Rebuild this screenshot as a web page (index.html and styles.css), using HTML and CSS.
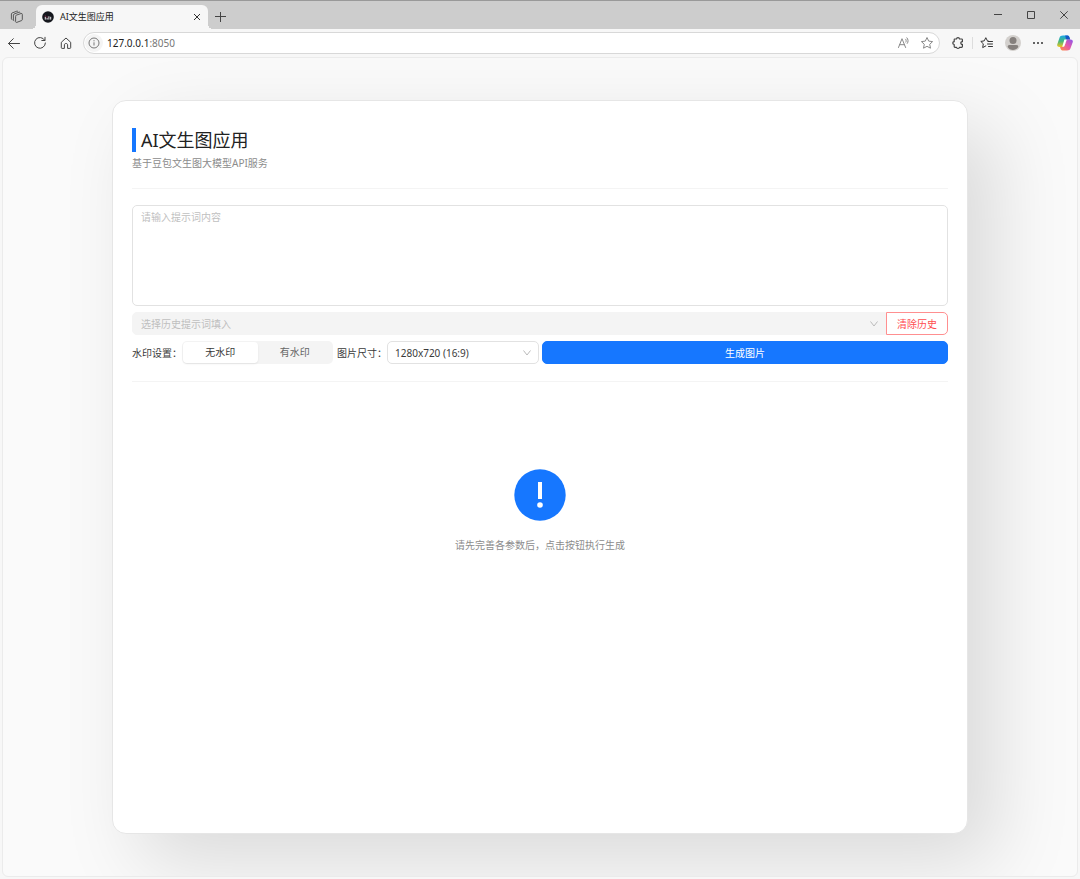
FILE: index.html
```html
<!DOCTYPE html>
<html lang="zh-CN">
<head>
<meta charset="utf-8">
<meta name="viewport" content="width=device-width, initial-scale=1">
<title>AI文生图应用</title>
<link rel="stylesheet" href="styles.css">
</head>
<body>
<div class="browser">
  <header class="tabstrip">
    <button class="icon-btn workspaces" type="button" aria-label="工作区">
      <svg width="14" height="14" viewBox="0 0 14 14" fill="none" stroke="#4a4a4a" stroke-width=".9" stroke-linejoin="round" stroke-linecap="round"><path d="M5.600 6.200c0-.5.200-.8.600-1l4.900-1.700c.7-.2 1.200.1 1.200.8v5.200c0 .5-.2.8-.6 1l-4.900 1.900c-.7.2-1.200-.1-1.200-.8zM3.900 10.800c-.4-.1-.5-.4-.5-.8V5.100c0-.5.200-.8.600-1l5-1.900c.5-.2.900 0 1.100.4M2 9.600c-.4-.1-.6-.4-.6-.8V4c0-.5.200-.8.600-1l4.800-1.800c.5-.2.900 0 1.100.3"/></svg>
    </button>
    <div class="tab">
      <svg class="favicon" width="12" height="12" viewBox="0 0 12 12"><circle cx="6" cy="6" r="5.8" fill="#15171d"/><path d="M3.300 6v2.600M5.100 7v1.600M6.900 5.300v3.300M8.700 5.800v2.800" stroke="#e8e8ec" stroke-width="1"/><path d="M3.300 4.700v.8M5.100 5.700v.8" stroke="#d64572"/></svg>
      <span class="tab-title">AI文生图应用</span>
      <button class="icon-btn" type="button" aria-label="关闭标签页">
        <svg width="8" height="8" viewBox="0 0 8 8" stroke="#333" fill="none"><path d="m1 1 6 6M7 1 1 7"/></svg>
      </button>
    </div>
    <button class="icon-btn new-tab" type="button" aria-label="新建标签页">
      <svg width="12" height="12" viewBox="0 0 12 12" stroke="#444" fill="none"><path d="M6.500 1v10M1 5.500h11"/></svg>
    </button>
    <div class="window-controls">
      <button class="icon-btn" type="button" aria-label="最小化"><svg width="10" height="10" viewBox="0 0 10 10" stroke="#444" fill="none"><path d="M1 4.500h8"/></svg></button>
      <button class="icon-btn" type="button" aria-label="最大化"><svg width="10" height="10" viewBox="0 0 10 10" stroke="#444" fill="none"><path d="M1.500 1.500h7v7h-7z"/></svg></button>
      <button class="icon-btn" type="button" aria-label="关闭"><svg width="10" height="10" viewBox="0 0 10 10" stroke="#444" fill="none"><path d="m1.300 1.300 7.400 7.400M8.700 1.300 1.300 8.700"/></svg></button>
    </div>
  </header>
  <nav class="toolbar">
    <div class="nav-buttons">
      <button class="icon-btn" type="button" aria-label="后退"><svg width="14" height="14" viewBox="0 0 14 14" stroke="#444" fill="none" stroke-linecap="round" stroke-linejoin="round"><path d="M12.500 7.500h-11M6.300 2.700 1.500 7.500l4.800 4.800"/></svg></button>
      <button class="icon-btn" type="button" aria-label="刷新"><svg width="14" height="14" viewBox="0 0 14 14" stroke="#444" fill="none" stroke-linecap="round" stroke-linejoin="round"><path d="M11.700 4.200A5.400 5.400 0 1 0 12.400 7M12 1.300v3.200H8.800"/></svg></button>
      <button class="icon-btn" type="button" aria-label="主页"><svg width="14" height="14" viewBox="0 0 14 14" stroke="#444" fill="none" stroke-linejoin="round"><path d="M2.300 6.300 7 2l4.700 4.300v5.300c0 .5-.3.800-.8.800H8.600V9c0-1-.6-1.500-1.600-1.500S5.400 8 5.400 9v3.400H3.100c-.5 0-.8-.3-.8-.8z"/></svg></button>
    </div>
    <div class="address">
      <button class="site-info" type="button" aria-label="网站信息"><svg width="12" height="12" viewBox="0 0 12 12" stroke="#777" fill="none"><circle cx="6" cy="6" r="5"/><path d="M6 5.300v3.200M6 3.200v1.100"/></svg></button>
      <span class="url">127.0.0.1<span class="port">:8050</span></span>
      <button class="icon-btn" type="button" aria-label="朗读"><svg width="14" height="14" viewBox="0 0 14 14" stroke="#888" fill="none" stroke-linecap="round" stroke-linejoin="round"><path d="M1.500 11.500 5 2.700l3.600 8.800M2.700 8.700h4.700M8.600 3.200c.7.7.8 2 .3 2.900M9.900 1.800c1.500 1.600 1.600 4 .4 5.600"/></svg></button>
      <button class="icon-btn star" type="button" aria-label="收藏"><svg width="14" height="14" viewBox="0 0 14 14" stroke="#888" fill="none" stroke-linejoin="round"><path d="m7 1.500 1.700 3.600 3.900.5-2.900 2.700.8 3.900L7 10.300l-3.500 1.900.8-3.900-2.900-2.700 3.900-.5z"/></svg></button>
    </div>
    <div class="tools">
      <button class="icon-btn" type="button" aria-label="扩展"><svg width="14" height="14" viewBox="0 0 14 14" stroke="#444" stroke-width="1.200" fill="none" stroke-linejoin="round"><path d="M3.700 3h1.800c.1-1.800 2.900-1.800 3 0h2.100c.5 0 .8.300.8.800v1.900c-2-.2-2.200 2.800 0 2.700v2.100c0 .5-.3.800-.8.800H8.500c-.1 1.600-2.900 1.600-3 0H4c-.5 0-.8-.3-.8-.8V8.500c-1.900-.1-1.900-2.700 0-2.800V3.700c0-.4.200-.7.500-.7z"/></svg></button>
      <span class="divider"></span>
      <button class="icon-btn" type="button" aria-label="收藏夹"><svg width="14" height="14" viewBox="0 0 14 14" stroke="#333" fill="none" stroke-linecap="round" stroke-linejoin="round"><path d="M8.200 4.900 7.400 4.800 5.800 1.700 4.200 4.900l-3.400.5 2.500 2.400-.6 3.800 3.100-1.700M8 5.500h4.500M7.500 8h5M8.500 10.500h4"/></svg></button>
      <button class="icon-btn" type="button" aria-label="个人资料"><svg width="16" height="16" viewBox="0 0 16 16"><circle cx="8" cy="8" r="8" fill="#d3d0cd"/><circle cx="8" cy="5.500" r="3.500" fill="#85807d"/><path d="M2.700 12c0-1.400.8-2 2-2h6.600c1.200 0 2 .6 2 2-1.100 1.900-3 3-5.300 3s-4.200-1.100-5.300-3z" fill="#85807d"/></svg></button>
      <button class="icon-btn" type="button" aria-label="更多"><svg width="12" height="12" viewBox="0 0 12 12" fill="#333"><circle cx="2" cy="6" r="1"/><circle cx="6" cy="6" r="1"/><circle cx="10" cy="6" r="1"/></svg></button>
      <button class="icon-btn copilot" type="button" aria-label="Copilot">
        <svg width="16" height="16" viewBox="0 0 16 16">
          <defs>
            <linearGradient id="cpl" x1="0" y1="0" x2="0" y2="1"><stop offset="0" stop-color="#19a8e8"/><stop offset=".5" stop-color="#48b87b"/><stop offset="1" stop-color="#f2c51d"/></linearGradient>
            <linearGradient id="cpr" x1="1" y1="0" x2="0" y2="1"><stop offset="0" stop-color="#8a55ee"/><stop offset=".5" stop-color="#e759a6"/><stop offset="1" stop-color="#ff9140"/></linearGradient>
          </defs>
          <path d="M6 .5h4.500c1.200 0 1.700.8 2 1.900l.6 2.100h-2c-1 0-1.500.5-1.800 1.400L7.800 10c-.4 1.400-1 2-2.300 2H2.600C.6 12-.2 10.800.3 9.200L2.500 2.700C3 1.300 4 .5 6 .5z" fill="url(#cpl)"/>
          <path d="M8.200.5h2.300c1.200 0 1.700.8 2 1.900l.6 2.100h-2.200c-.8 0-1.300.4-1.600 1z" fill="#1557c7"/>
          <path d="M10 15.500H5.500c-1.200 0-1.700-.8-2-1.900L3 12h2.500c1.300 0 1.900-.6 2.300-2l1.400-4.100c.3-.9.800-1.400 1.800-1.400h2.400c2 0 2.800 1.200 2.300 2.800L13.500 13.300c-.5 1.400-1.500 2.200-3.500 2.200z" fill="url(#cpr)"/>
          <path d="M7.400 4.600h2.900c-.6.200-.9.700-1.100 1.300L7.800 10c-.3 1-.7 1.600-1.300 1.800H5.200z" fill="#fff"/>
        </svg>
      </button>
    </div>
  </nav>
  <main class="viewport">
    <section class="card">
      <header class="heading">
        <h1 class="title">AI文生图应用</h1>
        <p class="subtitle">基于豆包文生图大模型API服务</p>
      </header>
      <form class="form">
        <textarea class="prompt" aria-label="提示词" placeholder="请输入提示词内容"></textarea>
        <div class="row history">
          <div class="select-wrap history-select">
            <select class="select filled" aria-label="选择历史提示词填入"><option>选择历史提示词填入</option></select>
            <svg class="chevron" width="10" height="10" viewBox="0 0 10 10" fill="none" stroke="#bbb"><path d="m1.500 2.500 3.500 4.500 3.500-4.500"/></svg>
          </div>
          <button class="btn danger" type="button">清除历史</button>
        </div>
        <div class="row">
          <span class="label" id="watermark-label">水印设置：</span>
          <div class="segmented" role="radiogroup" aria-labelledby="watermark-label">
            <label class="segment"><input class="segment-input" type="radio" name="watermark" checked><span class="segment-text">无水印</span></label>
            <label class="segment"><input class="segment-input" type="radio" name="watermark"><span class="segment-text">有水印</span></label>
          </div>
          <label class="label size-label" for="size">图片尺寸：</label>
          <div class="select-wrap size-select">
            <select class="select" id="size"><option>1280x720 (16:9)</option></select>
            <svg class="chevron" width="10" height="10" viewBox="0 0 10 10" fill="none" stroke="#bbb"><path d="m1.500 2.500 3.500 4.500 3.500-4.500"/></svg>
          </div>
          <button class="btn primary" type="button">生成图片</button>
        </div>
      </form>
      <div class="result">
        <svg width="52" height="52" viewBox="0 0 52 52"><circle cx="26" cy="26" r="25.700" fill="#1677ff"/><path d="M24 13h4v17h-4z" fill="#fff"/><circle cx="26" cy="36" r="2.800" fill="#fff"/></svg>
        <p class="result-text">请先完善各参数后，点击按钮执行生成</p>
      </div>
    </section>
  </main>
</div>
</body>
</html>
```
FILE: styles.css
```css
* { box-sizing: border-box; }

body {
  margin: 0;
  font: 10px/16px "Noto Sans", "Noto Sans CJK SC", sans-serif;
  color: #3a3a3a;
}

button, select, textarea { font: inherit; color: inherit; }

.browser {
  display: flex;
  flex-direction: column;
  min-height: 100vh;
  background: #f7f7f7;
}

.icon-btn {
  display: flex;
  flex: none;
  padding: 0;
  border: 0;
  background: none;
}

/* Tab strip */
.tabstrip {
  display: flex;
  align-items: center;
  height: 29px;
  padding: 4px 11px 0 10px;
  border-top: 1px solid #999;
  background: #cdcdcd;
}

.tab {
  position: relative;
  display: flex;
  align-items: center;
  gap: 6px;
  width: 172px;
  height: 24px;
  margin-left: 12px;
  padding: 0 7px 0 6px;
  border-radius: 6px 6px 0 0;
  background: #f7f7f7;
}

.tab::before, .tab::after {
  content: "";
  position: absolute;
  bottom: 0;
  width: 5px;
  height: 5px;
}

.tab::before { right: 100%; background: radial-gradient(circle at 0 0, #cdcdcd 5px, #f7f7f7 5px); }
.tab::after { left: 100%; background: radial-gradient(circle at 100% 0, #cdcdcd 5px, #f7f7f7 5px); }

.tab-title { flex: 1; font-size: 9px; color: #222; }
.new-tab { margin-left: 6px; }

.window-controls {
  display: flex;
  gap: 23px;
  margin-left: auto;
  padding-bottom: 4px;
}

/* Toolbar */
.toolbar {
  display: flex;
  align-items: center;
  height: 28px;
  padding: 0 7px;
}

.nav-buttons { display: flex; gap: 12px; }

.address {
  display: flex;
  flex: 1;
  align-items: center;
  height: 22px;
  margin-left: 10px;
  padding: 0 5px 0 1px;
  border: 1px solid #d8d8d8;
  border-radius: 11px;
  background: #fff;
}

.site-info {
  display: flex;
  padding: 3px;
  border: 0;
  border-radius: 50%;
  background: #f4f4f4;
}

.url { flex: 1; margin-left: 4px; color: #222; }
.port { color: #777; }
.star { margin-left: 9px; }

.tools {
  display: flex;
  align-items: center;
  gap: 11px;
  margin-left: 11px;
}

.divider { width: 1px; height: 12px; margin: 0 -4px; background: #ddd; }
.copilot { margin-left: 2px; }

/* Page */
.viewport {
  display: flex;
  flex: 1;
  margin: 0 2px 2px;
  padding: 42px 109px;
  overflow: hidden;
  border: 1px solid #ebebeb;
  border-radius: 6px;
  background: #fafafa;
}

.card {
  display: flex;
  flex: 1;
  flex-direction: column;
  min-width: 0;
  padding: 27px 19px 20px;
  border: 1px solid #e6e6e6;
  border-radius: 14px;
  background: #fff;
  box-shadow: 28px 28px 78px rgba(0, 0, 0, .13);
}

.heading { padding-bottom: 17px; border-bottom: 1px solid #f4f4f4; }

.title {
  margin: 0;
  padding-left: 5px;
  border-left: 4px solid #1677ff;
  font-size: 18px;
  font-weight: 400;
  line-height: 24px;
  color: #222;
}

.subtitle { margin: 3px 0 0; color: #8c8c8c; }

.form {
  display: flex;
  flex-direction: column;
  gap: 6px;
  padding: 16px 0 17px;
  border-bottom: 1px solid #f4f4f4;
}

.prompt {
  display: block;
  width: 100%;
  height: 101px;
  padding: 3px 8px;
  border: 1px solid #e2e2e2;
  border-radius: 5px;
  outline: 0;
  background: #fff;
  resize: none;
}

.prompt::placeholder { color: #bfbfbf; opacity: 1; }

.row { display: flex; align-items: center; min-width: 0; }

.select-wrap { position: relative; }

.select {
  display: block;
  width: 100%;
  height: 23px;
  padding: 0 24px 0 7px;
  border: 1px solid #e2e2e2;
  border-radius: 5px;
  outline: 0;
  background: #fff;
  appearance: none;
}

.filled {
  padding-left: 8px;
  border-color: #f4f4f4;
  border-radius: 5px 0 0 5px;
  background: #f4f4f4;
  color: #bfbfbf;
}

.chevron {
  position: absolute;
  top: 7px;
  right: 7px;
  pointer-events: none;
}

.history-select { flex: 1; }

.btn {
  height: 23px;
  padding: 0 10px;
  border: 1px solid;
  border-radius: 5px;
}

.danger {
  border-color: #ff8f90;
  border-radius: 0 5px 5px 0;
  background: #fff;
  color: #ff4d4f;
}

.primary {
  flex: 1;
  margin-left: 3px;
  border-color: #1677ff;
  background: #1677ff;
  color: #fff;
}

.label { flex: none; white-space: nowrap; }
.size-label { margin-left: 4px; }

.segmented {
  display: flex;
  flex: none;
  width: 151px;
  height: 23px;
  padding: 1px;
  border-radius: 5px;
  background: #f4f4f4;
}

.segment { position: relative; display: flex; flex: 1; }
.segment-input { position: absolute; inset: 0; margin: 0; opacity: 0; }

.segment-text {
  flex: 1;
  border-radius: 4px;
  line-height: 21px;
  text-align: center;
  color: #666;
}

.segment-input:checked + .segment-text {
  background: #fff;
  box-shadow: 0 1px 2px rgba(0, 0, 0, .08);
  color: #3a3a3a;
}

.size-select { flex: none; width: 152px; }

.result {
  display: flex;
  flex-direction: column;
  align-items: center;
  gap: 16px;
  padding: 87px 0;
}

.result-text { margin: 0; color: #8c8c8c; }
```
